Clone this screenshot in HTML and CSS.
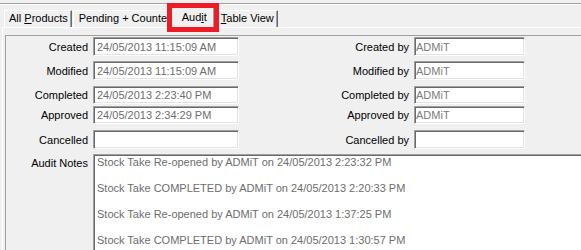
FILE: index.html
```html
<!DOCTYPE html>
<html lang="en">
<head>
    <meta charset="UTF-8">
    <meta name="viewport" content="width=device-width, initial-scale=1.0">
    <title>Stock Take - Audit</title>
    <link rel="stylesheet" href="styles.css">
</head>
<body>
    <div class="topbar"></div>
    <div class="tabs">
        <div class="tab">All <u>P</u>roducts</div>
        <div class="tab tab-clip">Pending + Counted</div>
        <div class="tab active">Aud<u>i</u>t</div>
        <div class="tab"><u>T</u>able View</div>
    </div>
    <div class="marker"></div>

    <div class="panel">
        <div class="box">
            <div class="row">
                <div class="label">Created</div>
                <div class="field">24/05/2013 11:15:09 AM</div>
                <div class="label">Created by</div>
                <div class="field field-user">ADMiT</div>
            </div>
            <div class="row">
                <div class="label">Modified</div>
                <div class="field">24/05/2013 11:15:09 AM</div>
                <div class="label">Modified by</div>
                <div class="field field-user">ADMiT</div>
            </div>
            <div class="row row-short row-wide">
                <div class="label">Completed</div>
                <div class="field">24/05/2013 2:23:40 PM</div>
                <div class="label">Completed by</div>
                <div class="field field-user">ADMiT</div>
            </div>
            <div class="row row-short row-tight">
                <div class="label">Approved</div>
                <div class="field">24/05/2013 2:34:29 PM</div>
                <div class="label">Approved by</div>
                <div class="field field-user">ADMiT</div>
            </div>
            <div class="row row-wide">
                <div class="label">Cancelled</div>
                <div class="field"></div>
                <div class="label">Cancelled by</div>
                <div class="field field-user"></div>
            </div>
            <div class="notes-row">
                <div class="label">Audit Notes</div>
                <div class="notes">
                    <p>Stock Take Re-opened by ADMiT on 24/05/2013 2:23:32 PM</p>
                    <p>Stock Take COMPLETED by ADMiT on 24/05/2013 2:20:33 PM</p>
                    <p>Stock Take Re-opened by ADMiT on 24/05/2013 1:37:25 PM</p>
                    <p>Stock Take COMPLETED by ADMiT on 24/05/2013 1:30:57 PM</p>
                </div>
            </div>
        </div>
    </div>
</body>
</html>
```

FILE: styles.css
```css
body {
    margin: 0;
    overflow: hidden;
    height: 250px;
    background: #f0f0f0;
    color: #000;
    font-family: "Liberation Sans", Arial, sans-serif;
    font-size: 11px;
    position: relative;
}
.topbar {
    height: 3px;
    border-bottom: 1px solid #a0a0a0;
    box-shadow: 0 1px #fff;
}
.tabs {
    display: flex;
    align-items: flex-end;
    height: 23px;
    padding-left: 4px;
}
.tab {
    box-sizing: border-box;
    height: 17px;
    line-height: 14px;
    padding: 0 3px 0 4px;
    margin-right: 1px;
    border-top: 1px solid #fff;
    border-left: 1px solid #fff;
    border-right: 1px solid #696969;
    box-shadow: inset -1px 0 #a0a0a0;
    white-space: nowrap;
}
/* the Pending tab is narrower than its caption, the way the app draws it */
.tab-clip {
    width: 98px;
    padding-left: 5px;
    overflow: hidden;
    text-overflow: clip;
}
.tab.active {
    position: relative;
    z-index: 1;
    height: 20px;
    line-height: 18px;
    margin-left: -1px;
    margin-right: 2px;
    padding: 0 7px 0 10px;
    background: #f0f0f0;
}
.tab.active + .tab {
    padding-left: 3px;
}
.marker {
    position: absolute;
    left: 167px;
    top: 3px;
    width: 52px;
    height: 29px;
    box-sizing: border-box;
    border: 5px solid #ed1c24;
    z-index: 2;
}
.panel {
    margin-left: 2px;
    padding: 7px 0 0 2px;
    border-top: 1px solid #fff;
    border-left: 1px solid #fff;
}
.box {
    padding-top: 1px;
    border-top: 1px solid #a0a0a0;
    border-left: 1px solid #a0a0a0;
}
.row {
    display: grid;
    grid-template-columns: 82px 146px 165px 111px;
    column-gap: 5px;
    height: 19px;
    margin-top: 5px;
}
.row:first-child {
    margin-top: 0;
}
.row-short {
    height: 18px;
}
.row-wide {
    margin-top: 6px;
}
.row-tight {
    margin-top: 2px;
}
.label {
    display: flex;
    align-items: center;
    justify-content: flex-end;
    white-space: nowrap;
}
.field {
    display: flex;
    align-items: center;
    box-sizing: border-box;
    padding-left: 3px;
    border: 1px solid;
    border-color: #a0a0a0 #fff #fff #a0a0a0;
    box-shadow: inset 1px 1px #696969, inset -1px -1px #e3e3e3;
    background: #fff;
    color: #6d6d6d;
    white-space: nowrap;
}
.field-user {
    padding-left: 1px;
    color: #7c7c7c;
}
.notes-row {
    display: flex;
    gap: 5px;
    margin-top: 5px;
}
.notes-row .label {
    flex: none;
    width: 82px;
    align-items: flex-start;
    padding-top: 3px;
    line-height: 13px;
}
/* the memo runs on past the window's right and bottom edges */
.notes {
    flex: 1;
    height: 96px;
    box-sizing: border-box;
    padding: 1px 0 0 3px;
    border-top: 1px solid #a0a0a0;
    border-left: 1px solid #a0a0a0;
    box-shadow: inset 1px 1px #696969;
    background: #fff;
    color: #6d6d6d;
    line-height: 13px;
    overflow: hidden;
}
.notes p {
    margin: 0 0 13px;
    white-space: nowrap;
}
```
